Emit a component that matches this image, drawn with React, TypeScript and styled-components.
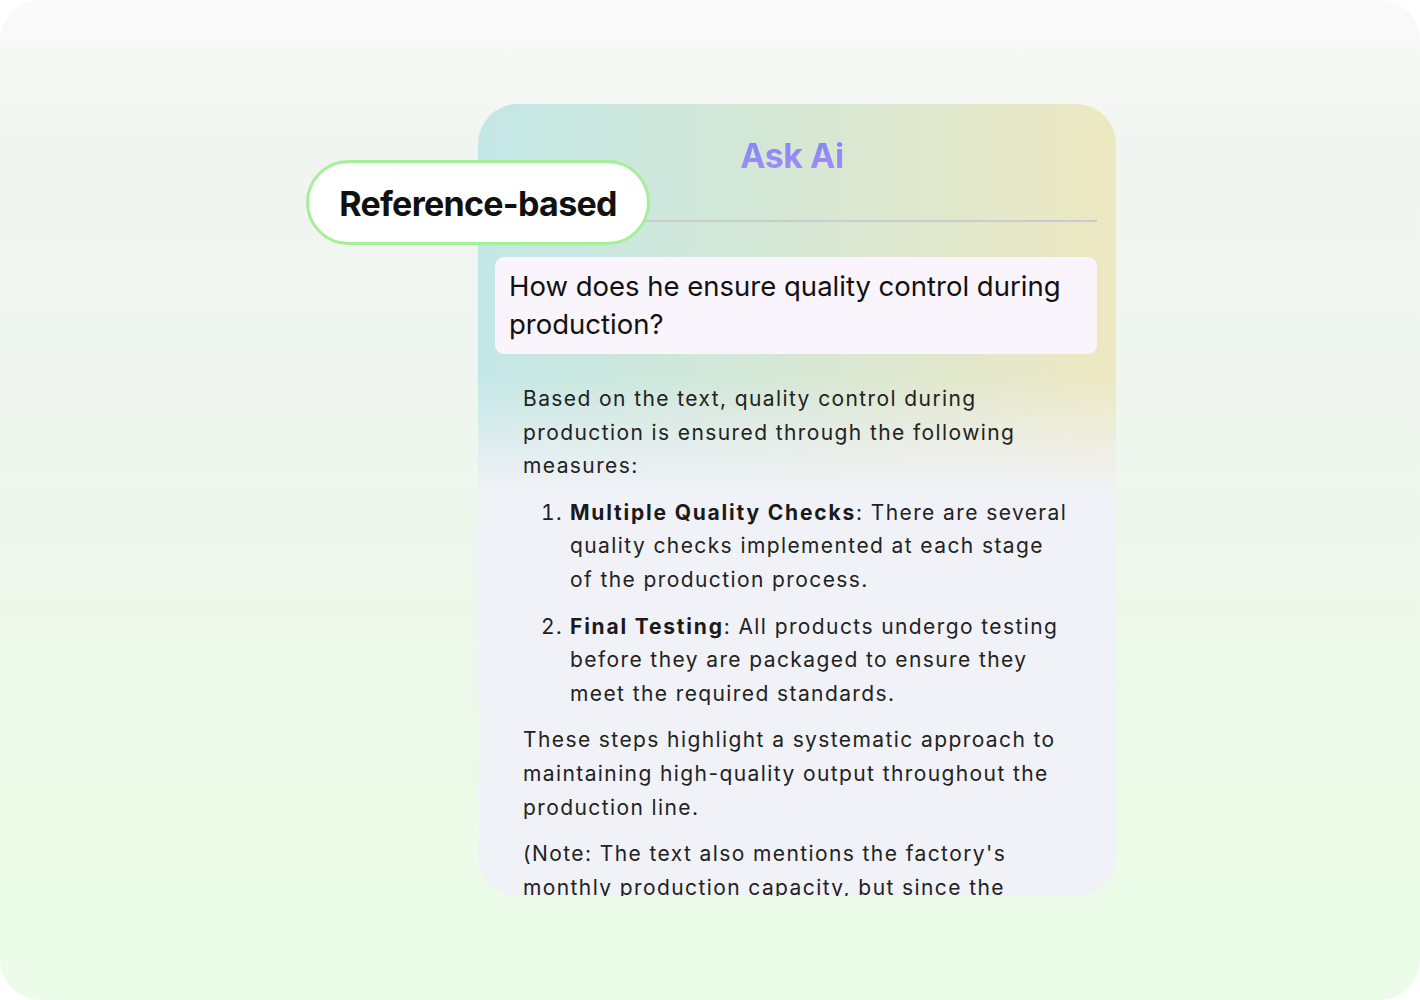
import React from "react";
import styled, { createGlobalStyle } from "styled-components";

const Global = createGlobalStyle`
  html, body { margin: 0; padding: 0; background: #ffffff; }
  body { font-family: Inter, "Noto Sans", sans-serif; }
`;

const Frame = styled.div`
  width: 1420px;
  height: 1000px;
  box-sizing: border-box;
  border-radius: 40px;
  background: linear-gradient(180deg, #fafafa 0%, #f1f5f1 14%, #eff6ee 45%, #ebfbe8 80%, #ebfde8 100%);
  padding: 104px 0 0 478px;
  overflow: hidden;
`;

const Card = styled.div`
  position: relative;
  width: 638px;
  height: 792px;
  border-radius: 40px;
  box-sizing: border-box;
  padding: 0 19px 0 17px;
  background:
    linear-gradient(180deg, rgba(241, 242, 247, 0) 0px, rgba(241, 242, 247, 0) 270px, #f1f2f7 390px),
    linear-gradient(90deg, #c3e7e6 0%, #d4e7d6 45%, #e9e8c6 90%, #ece9c0 100%);
`;

const Clip = styled.div`
  height: 100%;
  overflow: hidden;
`;

const Title = styled.h1`
  margin: 0;
  padding: 31px 8px 0 0;
  height: 118px;
  box-sizing: border-box;
  text-align: center;
  font-family: Inter, sans-serif;
  font-weight: 700;
  font-size: 34px;
  line-height: 42px;
  letter-spacing: -0.5px;
  border-bottom: 2px solid #c9cccc;
`;

const TitleText = styled.span`
  background: linear-gradient(180deg, #7c87f7 0%, #a98cf6 100%);
  -webkit-background-clip: text;
  background-clip: text;
  color: transparent;
`;

const Badge = styled.div`
  position: absolute;
  left: -172px;
  top: 56px;
  width: 344px;
  height: 85px;
  box-sizing: border-box;
  border: 3px solid #a5ef97;
  border-radius: 43px;
  background: #ffffff;
  display: flex;
  align-items: center;
  justify-content: center;
  padding-top: 2px;
  font-family: Inter, sans-serif;
  font-weight: 700;
  font-size: 34px;
  letter-spacing: -0.7px;
  color: #111111;
`;

const Question = styled.div`
  margin-top: 35px;
  background: #faf4fc;
  border-radius: 9px;
  padding: 10px 14px 11px;
  font-family: Inter, sans-serif;
  font-size: 27.5px;
  line-height: 38px;
  letter-spacing: 0;
  color: #111111;
`;

const Answer = styled.div`
  padding: 28px 0 0 28px;
  width: 547px;
  font-family: Inter, sans-serif;
  font-size: 21px;
  line-height: 33.6px;
  letter-spacing: 1.4px;
  color: #222222;
`;

const Para = styled.p`
  margin: 0 0 13px;
`;

const List = styled.ol`
  margin: 0 0 13px;
  padding-left: 47px;
`;

const Item = styled.li`
  margin-bottom: 13px;
  &:last-child { margin-bottom: 0; }
  strong { font-weight: 700; color: #1a1a1a; letter-spacing: 1.8px; }
`;

export default function App() {
  return (
    <>
      <Global />
      <Frame>
        <Card>
          <Clip>
            <Title>
              <TitleText>Ask Ai</TitleText>
            </Title>
            <Question>How does he ensure quality control during production?</Question>
            <Answer>
              <Para>
                Based on the text, quality control during production is ensured through the following measures:
              </Para>
              <List>
                <Item>
                  <strong>Multiple Quality Checks</strong>: There are several quality checks implemented at each stage of the production process.
                </Item>
                <Item>
                  <strong>Final Testing</strong>: All products undergo testing before they are packaged to ensure they meet the required standards.
                </Item>
              </List>
              <Para>
                These steps highlight a systematic approach to maintaining high-quality output throughout the production line.
              </Para>
              <Para>
                (Note: The text also mentions the factory's monthly production capacity, but since the question specifically asks about quality control, that detail is not directly relevant.)
              </Para>
            </Answer>
          </Clip>
          <Badge>Reference-based</Badge>
        </Card>
      </Frame>
    </>
  );
}
